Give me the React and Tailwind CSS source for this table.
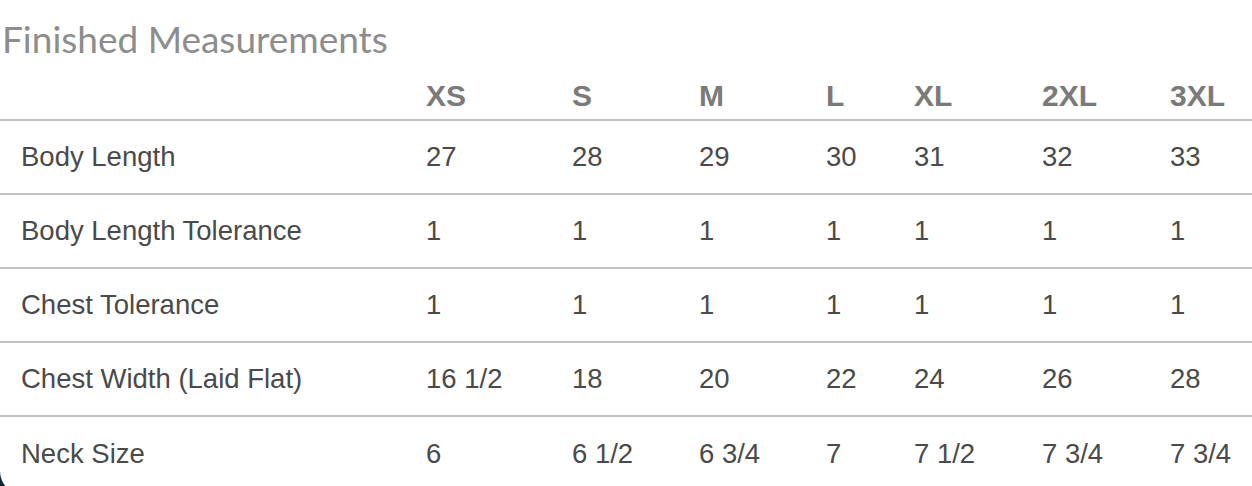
const sizes = ['XS', 'S', 'M', 'L', 'XL', '2XL', '3XL'];

const rows = [
  { label: 'Body Length', values: ['27', '28', '29', '30', '31', '32', '33'] },
  { label: 'Body Length Tolerance', values: ['1', '1', '1', '1', '1', '1', '1'] },
  { label: 'Chest Tolerance', values: ['1', '1', '1', '1', '1', '1', '1'] },
  { label: 'Chest Width (Laid Flat)', values: ['16 1/2', '18', '20', '22', '24', '26', '28'] },
  { label: 'Neck Size', values: ['6', '6 1/2', '6 3/4', '7', '7 1/2', '7 3/4', '7 3/4'] },
];

const App = () => {
  return (
    <div className="h-[486px] w-[1252px] overflow-hidden bg-[#0f2838]">
      <div className="h-[495px] bg-white rounded-bl-[24px] pt-[21px]">
        <h2
          className="pl-[2px] text-[37px] leading-[36px] text-[#8d8d8d] font-normal"
          style={{ fontFamily: 'Lato, "Open Sans", sans-serif' }}
        >
          Finished Measurements
        </h2>
        <table
          className="w-full table-fixed border-collapse"
          style={{ fontFamily: '"Liberation Sans", Arial, sans-serif' }}
        >
          <colgroup>
            <col className="w-[405px]" />
            <col className="w-[146px]" />
            <col className="w-[127px]" />
            <col className="w-[127px]" />
            <col className="w-[88px]" />
            <col className="w-[128px]" />
            <col className="w-[128px]" />
            <col />
          </colgroup>
          <thead>
            <tr className="h-[63px]">
              <th />
              {sizes.map((s) => (
                <th
                  key={s}
                  className="align-bottom pb-[5px] pl-[21px] text-left text-[30px] leading-[36px] font-bold text-[#7a7a7a]"
                >
                  {s}
                </th>
              ))}
            </tr>
          </thead>
          <tbody>
            {rows.map((row) => (
              <tr key={row.label} className="border-t-2 border-[#c2c2c2] h-[74px]">
                <td className="pl-[21px] text-[27.5px] leading-[32px] text-[#4a4a4a] whitespace-nowrap">
                  {row.label}
                </td>
                {row.values.map((v, i) => (
                  <td
                    key={i}
                    className="pl-[21px] text-[27.5px] leading-[32px] text-[#4a4a4a] whitespace-nowrap"
                  >
                    {v}
                  </td>
                ))}
              </tr>
            ))}
          </tbody>
        </table>
      </div>
    </div>
  );
};

export default App;
